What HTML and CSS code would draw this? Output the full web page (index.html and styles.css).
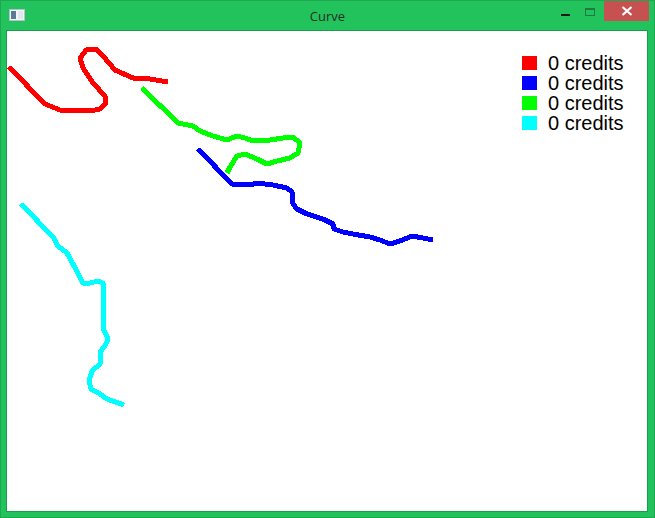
FILE: index.html
```html
<!DOCTYPE html>
<html>
<head>
<meta charset="utf-8">
<link rel="stylesheet" href="styles.css">
</head>
<body>
<div class="window">
  <div class="titlebar">
    <div class="left">
      <svg class="appicon" width="16" height="12" viewBox="0 0 16 12">
        <rect x="0.5" y="0.5" width="15" height="11" fill="#f2f4f6" stroke="#b8c0c8"/>
        <rect x="2" y="2" width="5" height="8" fill="#5a7a94"/>
        <rect x="9" y="2" width="5" height="8" fill="#dfe6ec"/>
      </svg>
    </div>
    <div class="title">Curve</div>
    <div class="buttons">
      <div class="btn min"><span class="minbar"></span></div>
      <div class="btn max"><span class="maxbox"></span></div>
      <div class="btn close">
        <svg width="12" height="10" viewBox="0 0 12 10"><path d="M1.5 1 L10.5 9 M10.5 1 L1.5 9" stroke="#fff" stroke-width="2.2" fill="none"/></svg>
      </div>
    </div>
  </div>
  <div class="client">
    <svg class="canvas" width="640" height="480" viewBox="7 30 640 480">
      <g fill="none" stroke-width="5" stroke-linejoin="round" stroke-linecap="butt">
        <polyline stroke="#ff0000" points="9,66 45,103 60,109 90,110 100,108 106,102 105,95 93,82 83,67 80,57 86,49 96,48 103,55 115,69 133,77 150,78 168,81"/>
        <polyline stroke="#00ff00" points="142,87 178,122 193,125 200,130 213,135 227,139 237,135 245,137 253,140 270,139 283,137 293,136 300,142 298,152 290,157 277,160 267,163 257,158 245,153 237,155 230,166 227,172"/>
        <polyline stroke="#0000ff" points="198,148 232,183 250,184 257,182 273,184 287,187 292,191 293,203 297,208 307,213 323,218 333,223 334,228 343,231 353,233 370,236 380,239 390,243 400,240 412,235 423,237 433,239"/>
        <polyline stroke="#00ffff" points="21,203 53,236 58,245 67,252 73,263 83,282 90,282 98,280 103,282 103,327 108,338 105,345 100,351 100,363 92,370 89,380 91,388 100,393 107,398 124,404"/>
      </g>
    </svg>
    <div class="legend">
      <div class="item"><span class="swatch red"></span><span class="label">0 credits</span></div>
      <div class="item"><span class="swatch blue"></span><span class="label">0 credits</span></div>
      <div class="item"><span class="swatch green"></span><span class="label">0 credits</span></div>
      <div class="item"><span class="swatch cyan"></span><span class="label">0 credits</span></div>
    </div>
  </div>
</div>
</body>
</html>
```

FILE: styles.css
```css
html, body {
  margin: 0;
  padding: 0;
  background: #22c35c;
}
.window {
  width: 655px;
  height: 518px;
  box-sizing: border-box;
  background: #22c35c;
  border: 1px solid #1ca94f;
  display: flex;
  flex-direction: column;
}
.titlebar {
  height: 28px;
  display: grid;
  grid-template-columns: 1fr auto 1fr;
  align-items: start;
}
.left {
  display: flex;
  padding: 8px 0 0 8px;
}
.appicon {
  display: block;
}
.title {
  font-family: "Open Sans", "Noto Sans", sans-serif;
  font-size: 13px;
  color: #222c26;
  padding-top: 7px;
  line-height: 17px;
}
.buttons {
  justify-self: end;
  display: flex;
  align-items: stretch;
  height: 20px;
  margin-right: 5px;
}
.btn {
  display: flex;
  align-items: center;
  justify-content: center;
}
.min {
  width: 26px;
}
.minbar {
  width: 9px;
  height: 2px;
  background: #1b1b1b;
  margin-top: 7px;
}
.max {
  width: 26px;
}
.maxbox {
  width: 8px;
  height: 5px;
  border: 1px solid #1e7a43;
  border-top-width: 2px;
  margin-top: 2px;
  margin-right: 3px;
}
.close {
  width: 45px;
  background: #c75050;
}
.client {
  position: relative;
  margin: 1px 0 0 5px;
  width: 640px;
  height: 480px;
  background: #ffffff;
  border: 1px solid #1a9e4b;
}
.canvas {
  display: block;
  shape-rendering: crispEdges;
}
.legend {
  position: absolute;
  top: 22px;
  left: 515px;
  display: flex;
  flex-direction: column;
}
.item {
  display: flex;
  align-items: center;
  height: 20px;
}
.swatch {
  width: 15px;
  height: 14px;
  margin-right: 11px;
}
.red { background: #ff0000; }
.blue { background: #0000ff; }
.green { background: #00ff00; }
.cyan { background: #00ffff; }
.label {
  font-family: "Liberation Sans", Arial, sans-serif;
  font-size: 20px;
  line-height: 20px;
  color: #000;
}
```
